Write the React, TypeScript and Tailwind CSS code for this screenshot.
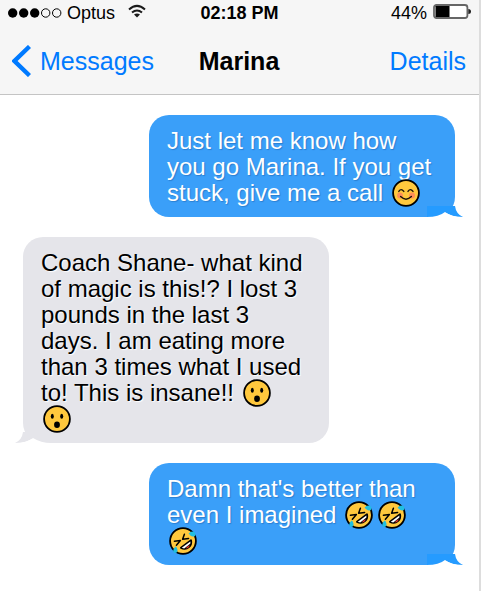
import type { ReactNode } from 'react';

type EmojiKind = 'blush' | 'wow' | 'rofl';

const emojiLabels: Record<EmojiKind, string> = {
  blush: 'smiling face',
  wow: 'surprised face',
  rofl: 'rolling on the floor laughing',
};

function Emoji({ kind }: { kind: EmojiKind }) {
  return (
    <svg
      role="img"
      aria-label={emojiLabels[kind]}
      viewBox="0 0 28 28"
      className="-my-2 mr-[3px] ml-0.5 inline-block size-7 align-[2px]"
    >
      <circle cx="14" cy="14" r="12.9" fill="#ffc83d" stroke="#000" strokeWidth="1.8" />
      {kind === 'blush' && (
        <>
          <circle cx="8" cy="16.5" r="3" fill="#ff8f57" />
          <circle cx="20" cy="16.5" r="3" fill="#ff8f57" />
          <g fill="none" stroke="#1a1208" strokeWidth="1.4" strokeLinecap="round">
            <path d="M6.8 12.4q2.4-3.6 5 0M16 12.4q2.4-3.6 5 0M8.6 17.6q5.4 5.2 10.8 0" />
          </g>
        </>
      )}
      {kind === 'wow' && (
        <g fill="#000">
          <ellipse cx="9.3" cy="11.2" rx="1.5" ry="2.5" />
          <ellipse cx="18.7" cy="11.2" rx="1.5" ry="2.5" />
          <ellipse cx="14" cy="19.7" rx="2.9" ry="3.2" />
        </g>
      )}
      {kind === 'rofl' && (
        <>
          <path d="M12 20.8L22 13.4C23.2 18 18.4 24 12 20.8Z" fill="#17120c" stroke="#000" strokeWidth="2" strokeLinejoin="round" />
          <path d="M12.8 20.8L21.4 14.4L21.4 16.4L15.2 21.4Z" fill="#fff" />
          <path d="M17 21.6q1-3 4-3.2q-1.2 2.6-4 3.2Z" fill="#e8352e" />
          <g fill="none" stroke="#000" strokeWidth="1.5" strokeLinecap="round" strokeLinejoin="round">
            <path d="M5.4 14.2L11.4 13.6L7.4 18.2M15.4 7.2L13.6 12.2L19.6 11.4" />
          </g>
          <path d="M19.6 6.4Q22.6 3.4 25.8 5.4Q27.6 9.6 23.8 9.6Q21.6 9.2 19.6 6.4Z" fill="#20bfe0" />
          <path d="M7 19.2Q9.6 23.2 7.8 25.6Q4.6 27 4.2 23.4Q4.4 21 7 19.2Z" fill="#20bfe0" />
        </>
      )}
    </svg>
  );
}

function Bubble({ sent = false, children }: { sent?: boolean; children: ReactNode }) {
  if (sent) {
    return (
      <li className="relative w-[306px] self-end rounded-[20px] bg-[#3a9ff9] pt-[13px] pr-5 pb-[11px] pl-[18px] text-white [text-shadow:1px_1px_1px_#2b7fd0]">
        {children}
        <svg aria-hidden="true" viewBox="0 0 36 12" className="absolute -right-2 -bottom-px h-3 w-9">
          <path d="M0 0H28Q29 8 36 11Q24 11 18 6Q10 11 0 11Z" fill="#259bff" />
          <path d="M0 11Q12 11 18 6Q24 11 36 11V12H0Z" fill="#fff" />
        </svg>
      </li>
    );
  }
  return (
    <li className="relative w-[306px] self-start rounded-[20px] bg-[#e5e5ea] pt-[13px] pr-5 pb-[11px] pl-[18px] text-black [text-shadow:1px_1px_1px_#ffffff]">
      {children}
      <svg aria-hidden="true" viewBox="0 0 36 12" className="absolute -bottom-px -left-2 h-3 w-9">
        <path d="M36 0H8Q7 8 0 11Q12 11 18 6Q26 11 36 11Z" fill="#e5e5ea" />
        <path d="M36 11Q26 11 18 6Q12 11 0 11V12H36Z" fill="#fff" />
      </svg>
    </li>
  );
}

function StatusBar() {
  return (
    <div className="grid h-[26px] grid-cols-[1fr_auto_1fr] items-center px-2 text-lg leading-5">
      <div className="flex items-center">
        <svg aria-label="Signal strength" role="img" viewBox="0 0 54 10" className="h-[10px] w-[54px]">
          <circle cx="4.7" cy="5" r="4.7" />
          <circle cx="15.7" cy="5" r="4.7" />
          <circle cx="26.7" cy="5" r="4.7" />
          <circle cx="37.7" cy="5" r="4.2" fill="none" stroke="#000" />
          <circle cx="48.7" cy="5" r="4.2" fill="none" stroke="#000" />
        </svg>
        <span className="ml-[5px]">Optus</span>
        <svg aria-label="Wi-Fi" role="img" viewBox="0 0 18 14" className="-mt-1 ml-[13px] h-[14px] w-[18px]">
          <g fill="none" stroke="#1a1a1a" strokeWidth="2">
            <path d="M1 5.4Q9-1.6 17 5.4M4 8.6Q9 4.4 14 8.6" />
          </g>
          <path d="M6 10.6Q9 8.4 12 10.6L9 13.6Z" fill="#1a1a1a" />
        </svg>
      </div>
      <time className="font-bold">02:18 PM</time>
      <div className="flex items-center justify-end">
        <span>44%</span>
        <svg aria-label="Battery" role="img" viewBox="0 0 38 15" className="-mt-1 ml-1.5 h-[15px] w-[38px]">
          <rect x="1" y="1" width="33.4" height="13" rx="2.5" fill="#fff" stroke="#666" strokeWidth="1.8" />
          <rect x="2.5" y="2" width="14" height="11" fill="#000" />
          <path d="M35.3 5Q38 5 38 7.5Q38 10 35.3 10Z" fill="#222" />
        </svg>
      </div>
    </div>
  );
}

export default function App() {
  return (
    <div className="min-h-screen border-r-2 border-[#dddddd] bg-white font-['Liberation_Sans',Arial,sans-serif] text-black">
      <header className="border-b border-[#c4c4c4] bg-[#f6f6f6]">
        <StatusBar />
        <div className="grid h-17 grid-cols-[1fr_auto_1fr] items-center pt-0.5 pr-[13px] pl-3 text-[25px] leading-[30px]">
          <a href="#messages" className="flex items-center text-[#007aff]">
            <svg aria-hidden="true" viewBox="0 0 19 32" className="h-8 w-[19px]">
              <path d="M17.5 1.5L2.5 16L17.5 30.5" fill="none" stroke="#007aff" strokeWidth="4.4" />
            </svg>
            <span className="ml-[9px]">Messages</span>
          </a>
          <h1 className="font-bold">Marina</h1>
          <a href="#details" className="justify-self-end text-[#007aff]">Details</a>
        </div>
      </header>
      <main>
        <ul className="flex flex-col gap-5 py-5 pr-6 pl-[23px] text-2xl leading-[26px]">
          <Bubble sent>
            Just let me know how you go Marina. If you get stuck, give me a call <Emoji kind="blush" />
          </Bubble>
          <Bubble>
            Coach Shane- what kind of magic is this!? I lost 3 pounds in the last 3 days. I am eating more than 3 times
            what I used to! This is insane!! <Emoji kind="wow" />
            <br />
            <Emoji kind="wow" />
          </Bubble>
          <Bubble sent>
            Damn that's better than even I imagined <Emoji kind="rofl" />
            <Emoji kind="rofl" />
            <Emoji kind="rofl" />
          </Bubble>
        </ul>
      </main>
    </div>
  );
}
